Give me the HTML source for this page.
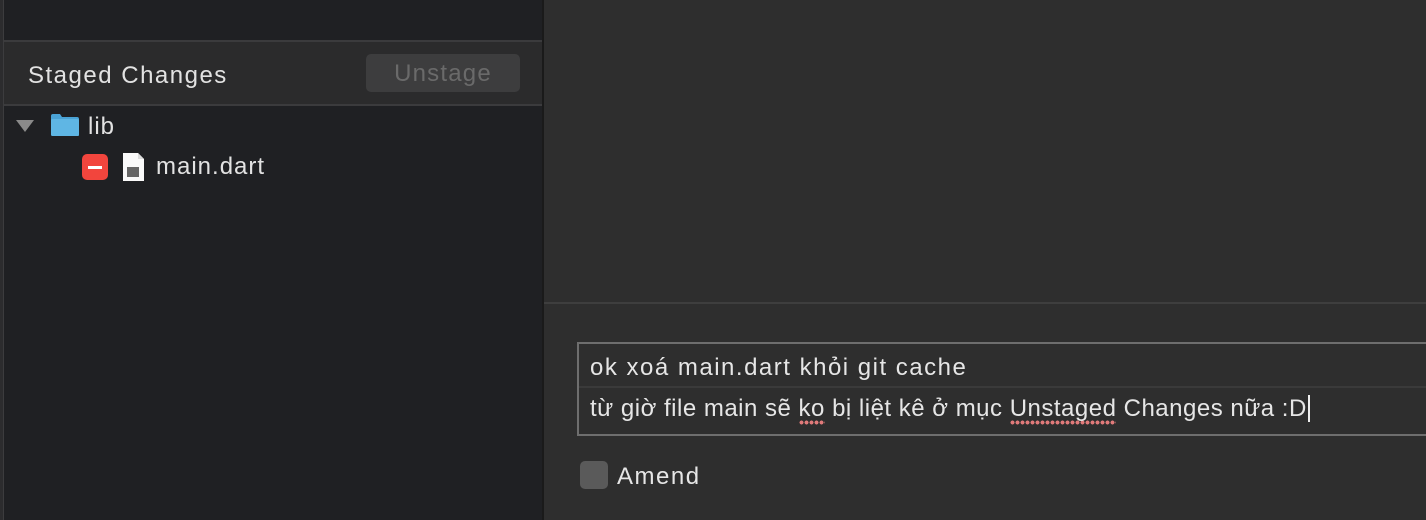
<!DOCTYPE html>
<html><head><meta charset="utf-8"><style>
body{margin:0;width:1426px;height:520px;overflow:hidden;background:#2e2e2e;font-family:"Liberation Sans","DejaVu Sans",sans-serif;position:relative}
.abs{position:absolute}
.sp{background-image:radial-gradient(circle,#e07a7a 1.8px,transparent 2.1px);background-size:5px 5px;background-repeat:repeat-x;background-position:0 100%;padding-bottom:3px}
</style></head><body>
<div class="abs" style="left:0;top:0;width:3px;height:520px;background:#2c2c2e"></div>
<div class="abs" style="left:3px;top:0;width:1px;height:520px;background:#3c3c3e"></div>
<div class="abs" style="left:4px;top:0;width:538px;height:520px;background:#1f2023"></div>
<div class="abs" style="left:4px;top:40px;width:538px;height:2px;background:#3b3b3d"></div>
<div class="abs" style="left:4px;top:42px;width:538px;height:62px;background:#2b2b2c"></div>
<div class="abs" style="left:4px;top:104px;width:538px;height:2px;background:#3b3b3d"></div>
<div class="abs" style="left:28px;top:62px;font-size:24px;letter-spacing:1.5px;color:#e2e2e2">Staged Changes</div>
<div class="abs" style="left:366px;top:54px;width:154px;height:38px;background:#3d3d3e;border-radius:5px;color:#6a6a6a;font-size:24px;letter-spacing:1.2px;text-align:center;line-height:40px">Unstage</div>
<div class="abs" style="left:16px;top:120px;width:0;height:0;border-left:9px solid transparent;border-right:9px solid transparent;border-top:12px solid #8a8a8a"></div>
<svg class="abs" style="left:50px;top:113px" width="30" height="24"><path d="M1 3 Q1 1 3 1 H10 L12 4 H27 Q29 4 29 6 V22 Q29 23 27 23 H3 Q1 23 1 21Z" fill="#4aa3d6"/><rect x="1" y="6" width="28" height="17" rx="1.5" fill="#5fb6e4"/></svg>
<div class="abs" style="left:88px;top:113px;font-size:24px;letter-spacing:1px;color:#e2e2e2">lib</div>
<div class="abs" style="left:82px;top:154px;width:26px;height:26px;background:#f2453d;border-radius:5px"><div style="margin:12px 6px 0;height:3px;background:#fff"></div></div>
<svg class="abs" style="left:122px;top:152px" width="24" height="30"><path d="M1 1 H16 L22 7 V29 H1Z" fill="#fafafa"/><path d="M16 1 V7 H22" fill="#ddd"/><rect x="5" y="15" width="12" height="10" fill="#666"/></svg>
<div class="abs" style="left:156px;top:153px;font-size:24px;letter-spacing:1px;color:#e2e2e2">main.dart</div>
<div class="abs" style="left:542px;top:0;width:2px;height:520px;background:#1a1a1a"></div>
<div class="abs" style="left:544px;top:302px;width:882px;height:2px;background:#3e3e3e"></div>
<div class="abs" style="left:577px;top:342px;width:860px;height:90px;border:2px solid #6e6e6e;background:#2e2e2e"></div>
<div class="abs" style="left:579px;top:386px;width:847px;height:2px;background:#3a3a3a"></div>
<div class="abs" style="left:590px;top:354px;font-size:24px;letter-spacing:1.5px;color:#e6e6e6;white-space:nowrap">ok xoá main.dart khỏi git cache</div>
<div class="abs" style="left:590px;top:395px;font-size:24px;letter-spacing:0.5px;color:#e6e6e6;white-space:nowrap">từ giờ file main sẽ <span class="sp">ko</span> bị liệt kê ở mục <span class="sp">Unstaged</span> Changes nữa :D<span style="border-left:2px solid #eee;margin-left:1px"></span></div>
<div class="abs" style="left:580px;top:461px;width:28px;height:28px;border-radius:5px;background:#5a5a5a"></div>
<div class="abs" style="left:617px;top:463px;font-size:24px;letter-spacing:1.5px;color:#e6e6e6">Amend</div>
</body></html>
